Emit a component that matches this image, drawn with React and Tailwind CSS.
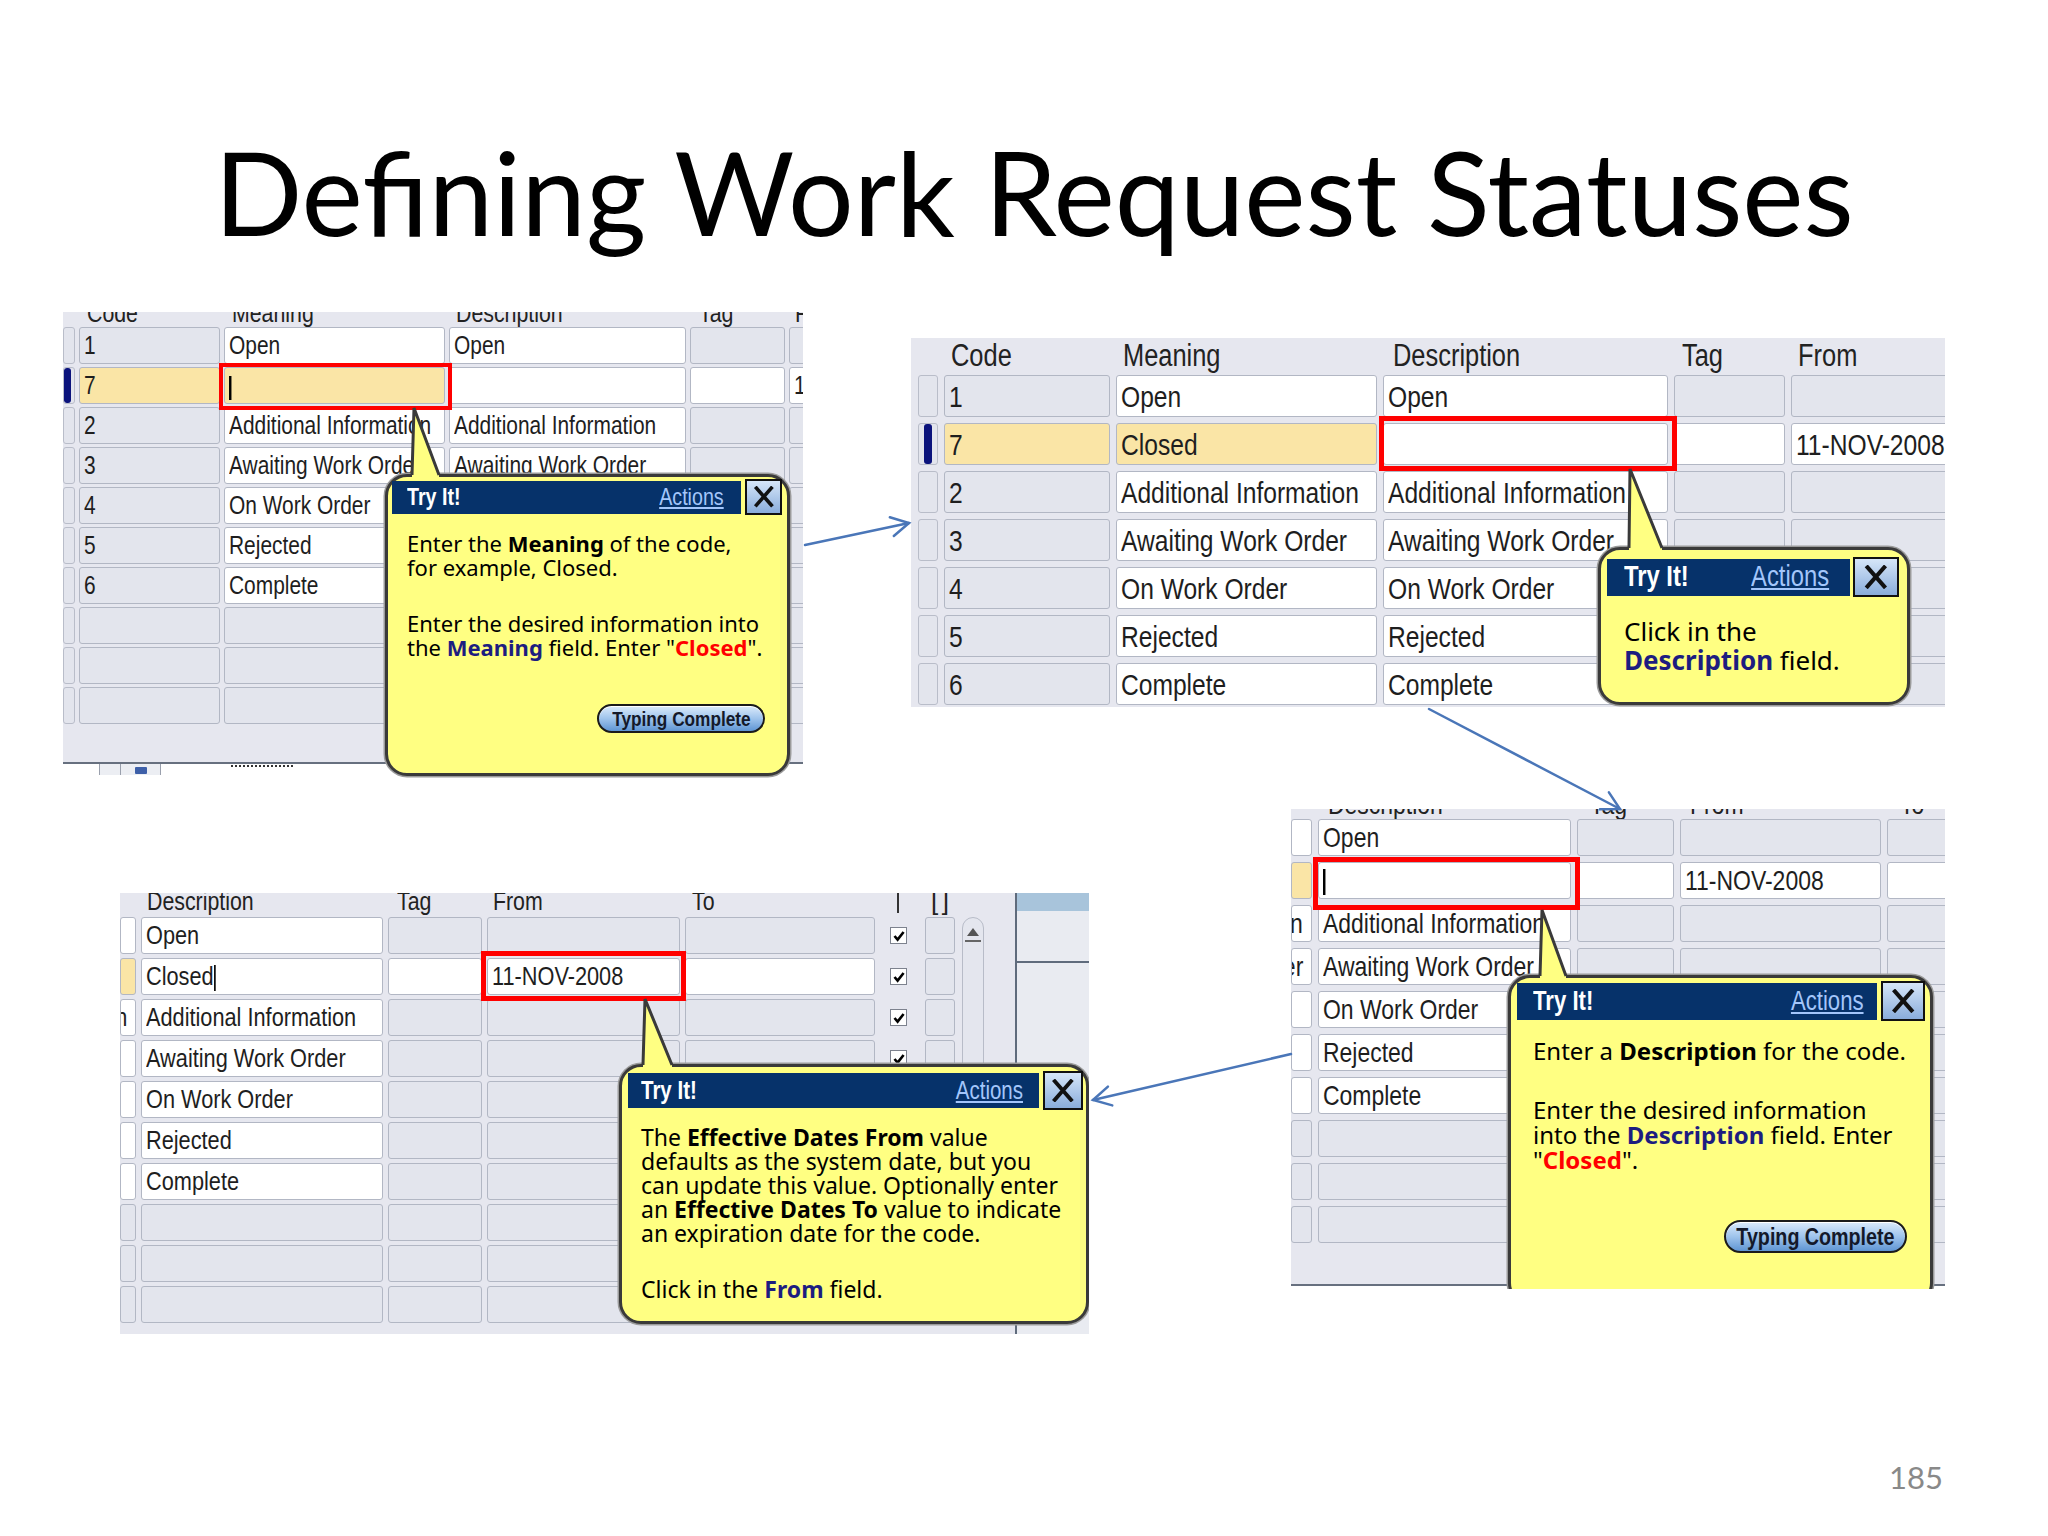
import React from 'react';

const ORA = "font-['Liberation_Sans',Arial,sans-serif]";
const TIPF = "font-['Noto_Sans',sans-serif]";
const NL = 'inline-block whitespace-nowrap origin-left scale-x-[0.82]';
const NR = 'inline-block whitespace-nowrap origin-right scale-x-[0.82]';
const NC = 'inline-block whitespace-nowrap origin-center scale-x-[0.82]';

function Cell({ w, kind = 'gray', right = false, children }) {
  const bg = kind === 'white' ? 'bg-white' : kind === 'yellow' ? 'bg-[#fae5a6]' : 'bg-[#e3e5ed]';
  const has = children !== undefined && children !== null && children !== '';
  return (
    <div
      className={`${w} ${bg} h-full shrink-0 overflow-hidden whitespace-nowrap rounded-[3px] border-[1.5px] border-[#b2b7c4] flex items-center ${right ? 'justify-end pr-[8px]' : 'pl-[4px]'} text-[#1e1e1e]`}
    >
      {has && <span className={right ? NR : NL}>{children}</span>}
    </div>
  );
}

function Ind({ w, sel, bar }) {
  return (
    <div className={`${w} h-full shrink-0 overflow-hidden rounded-[3px] border-[1.5px] border-[#b9bdc9] bg-[#e3e5ed] flex`}>
      {sel && <div className={`${bar} h-full rounded-[3px] bg-[#0b137c]`} />}
    </div>
  );
}

function Caret({ h = 'h-[24px]' }) {
  return <span className={`inline-block align-middle w-[2.5px] ${h} bg-black`} />;
}

function XBtn({ cls }) {
  return (
    <div className={`${cls} shrink-0 border-[2.5px] border-[#111] bg-linear-to-b from-[#d6e6f8] to-[#8aaddb] flex items-center justify-center`}>
      <svg viewBox="0 0 20 20" className="w-[66%] h-[66%]">
        <path d="M3 2 L17 18 M17 2 L3 18" stroke="#111" strokeWidth="3.4" strokeLinecap="square" fill="none" />
      </svg>
    </div>
  );
}

function TipBox({ className, children }) {
  return (
    <div className={`absolute ${className} rounded-[22px] border-[3px] border-[#3a3a3a] bg-[#ffff82] shadow-[0_0_0_1.5px_#9b9b9b] flex flex-col text-black ${TIPF}`}>
      {children}
    </div>
  );
}

function TipHeader({ wrap, bar, title, actions, xbtn }) {
  return (
    <div className={`flex items-center ${wrap}`}>
      <div className={`${bar} shrink-0 bg-[#06326a] flex items-center justify-between ${ORA}`}>
        <span className={`${title} font-bold text-white`}>
          <span className={NL}>Try It!</span>
        </span>
        <span className={`${actions} text-[#a3c6fb]`}>
          <span className={`${NR} underline`}>Actions</span>
        </span>
      </div>
      <XBtn cls={xbtn} />
    </div>
  );
}

function TypingBtn({ cls }) {
  return (
    <div className={`${cls} self-end rounded-full border-[2.5px] border-[#1b1b1b] bg-linear-to-b from-[#dcebfb] via-[#9fc4ec] to-[#5f95d3] shadow-[inset_0_1px_0_#ffffff] flex items-center justify-center font-bold leading-none text-[#14192a] ${ORA}`}>
      <span className={NC}>Typing Complete</span>
    </div>
  );
}

function Tail({ tip, bl, br, top }) {
  const pts = `${tip[0]},${tip[1]} ${bl},${top} ${bl},${top + 6} ${br},${top + 6} ${br},${top}`;
  return (
    <svg className="absolute left-0 top-0 w-full h-full pointer-events-none overflow-visible">
      <polygon points={pts} fill="#ffff82" />
      <polyline points={`${bl},${top + 1} ${tip[0]},${tip[1]} ${br},${top + 1}`} fill="none" stroke="#3a3a3a" strokeWidth="3" />
    </svg>
  );
}

function Check() {
  return (
    <div className="w-[17px] h-[17px] bg-white border-[1.5px] border-[#7d828e] flex items-center justify-center">
      <svg viewBox="0 0 12 12" className="w-[12px] h-[12px]">
        <path d="M1.5 6 L4.6 9.6 L10.6 2" fill="none" stroke="#000" strokeWidth="2.6" />
      </svg>
    </div>
  );
}

function Arrow({ x1, y1, x2, y2 }) {
  const a = Math.atan2(y2 - y1, x2 - x1);
  const L = 20;
  const s = 0.5;
  const p1 = [x2 - L * Math.cos(a - s), y2 - L * Math.sin(a - s)];
  const p2 = [x2 - L * Math.cos(a + s), y2 - L * Math.sin(a + s)];
  return (
    <g stroke="#4a76b8" strokeWidth="2.5" fill="none" strokeLinecap="round">
      <line x1={x1} y1={y1} x2={x2} y2={y2} />
      <polyline points={`${p1[0]},${p1[1]} ${x2},${y2} ${p2[0]},${p2[1]}`} />
    </g>
  );
}

function Hd({ cls, children }) {
  return (
    <div className={`${cls} shrink-0`}>
      <span className={NL}>{children}</span>
    </div>
  );
}

const DATA = [
  { c: '1', m: 'Open', d: 'Open' },
  { c: '7', sel: true },
  { c: '2', m: 'Additional Information', d: 'Additional Information' },
  { c: '3', m: 'Awaiting Work Order', d: 'Awaiting Work Order' },
  { c: '4', m: 'On Work Order', d: 'On Work Order' },
  { c: '5', m: 'Rejected', d: 'Rejected' },
  { c: '6', m: 'Complete', d: 'Complete' },
];
const P1ROWS = [...DATA, {}, {}, {}];

const NAVY = 'text-[#1d1d80]';
const RED = 'text-[#ff0000]';

function Panel1() {
  return (
    <div className="absolute left-[63px] top-[312px] w-[740px] h-[469px] overflow-hidden bg-white">
      <div className={`h-[452px] bg-[#e6e7ef] border-b-[2px] border-[#67707f] flex flex-col ${ORA}`}>
        <div className="h-[15px] overflow-hidden flex items-end gap-[4px] text-[26px] leading-[26px] text-[#222]">
          <div className="w-[12px] shrink-0" />
          <Hd cls="w-[141px] pl-[8px] mb-[1px]">Code</Hd>
          <Hd cls="w-[221px] pl-[8px] mb-[1px]">Meaning</Hd>
          <Hd cls="w-[237px] pl-[7px] mb-[1px]">Description</Hd>
          <Hd cls="w-[95px] pl-[9px] mb-[1px]">Tag</Hd>
          <Hd cls="w-[40px] pl-[6px] mb-[1px]">F</Hd>
        </div>
        <div className="flex flex-col gap-[3px] text-[25.5px]">
          {P1ROWS.map((r, i) => (
            <div key={i} className="flex h-[37px] gap-[4px]">
              <Ind w="w-[12px]" sel={r.sel} bar="w-[7px]" />
              <Cell w="w-[141px]" kind={r.sel ? 'yellow' : 'gray'}>{r.c}</Cell>
              <Cell w="w-[221px]" kind={r.sel ? 'yellow' : r.c ? 'white' : 'gray'}>{r.sel ? <Caret /> : r.m}</Cell>
              <Cell w="w-[237px]" kind={r.c ? 'white' : 'gray'}>{r.d}</Cell>
              <Cell w="w-[95px]" kind={r.sel ? 'white' : 'gray'} />
              <Cell w="w-[40px]" kind={r.sel ? 'white' : 'gray'}>{r.sel ? '1' : ''}</Cell>
            </div>
          ))}
        </div>
      </div>
      <div className="h-[13px] flex items-start pl-[36px]">
        <div className="w-[22px] h-[11px] border-x-[1.5px] border-[#9aa0ad] bg-[#eceef3]" />
        <div className="w-[40px] h-[11px] border-r-[1.5px] border-[#9aa0ad] bg-[#eceef3] flex justify-center">
          <div className="w-[12px] h-[7px] mt-[3px] bg-[#3d5fa8] rounded-[1px]" />
        </div>
        <div className="ml-[70px] w-[62px] h-[3px] mt-[1px] border-t-[2px] border-dotted border-[#333]" />
      </div>
      <div className="absolute left-[156px] top-[51px] w-[233px] h-[47px] border-[4px] border-[#ff0000]" />
      <TipBox className="left-[322px] top-[162px] w-[405px] h-[302px]">
        <TipHeader wrap="pt-[2px] pl-[4px] gap-[4px]" bar="w-[349px] h-[33px]" title="text-[24px] pl-[15px]" actions="text-[24px] pr-[17px]" xbtn="w-[37px] h-[36px]" />
        <div className="mt-[16px] pl-[19px] text-[22px] leading-[24px] whitespace-nowrap">
          <p>Enter the <b>Meaning</b> of the code,<br />for example, Closed.</p>
          <p className="mt-[32px]">Enter the desired information into<br />the <b className={NAVY}>Meaning</b> field. Enter "<b className={RED}>Closed</b>".</p>
        </div>
        <TypingBtn cls="mt-[45px] mr-[22px] w-[168px] h-[29px] text-[21px]" />
      </TipBox>
      <Tail tip={[351, 96]} bl={349} br={376} top={162} />
    </div>
  );
}

function Panel2() {
  return (
    <div className={`absolute left-[911px] top-[338px] w-[1034px] h-[369px] overflow-hidden bg-[#e6e7ef] ${ORA}`}>
      <div className="h-[37px] flex gap-[6px] pl-[7px] pt-[2px] text-[31px] leading-[31px] text-[#222]">
        <div className="w-[20px] shrink-0" />
        <Hd cls="w-[166px] pl-[7px]">Code</Hd>
        <Hd cls="w-[261px] pl-[7px]">Meaning</Hd>
        <Hd cls="w-[285px] pl-[10px]">Description</Hd>
        <Hd cls="w-[111px] pl-[8px]">Tag</Hd>
        <Hd cls="w-[180px] pl-[7px]">From</Hd>
      </div>
      <div className="flex flex-col gap-[6px] pl-[7px] text-[30px]">
        {DATA.map((r, i) => (
          <div key={i} className="flex h-[42px] gap-[6px]">
            <Ind w="w-[20px]" sel={r.sel} bar="ml-[5px] w-[8px]" />
            <Cell w="w-[166px]" kind={r.sel ? 'yellow' : 'gray'}>{r.c}</Cell>
            <Cell w="w-[261px]" kind={r.sel ? 'yellow' : 'white'}>{r.sel ? 'Closed' : r.m}</Cell>
            <Cell w="w-[285px]" kind="white">{r.d}</Cell>
            <Cell w="w-[111px]" kind={r.sel ? 'white' : 'gray'} />
            <Cell w="w-[180px]" kind={r.sel ? 'white' : 'gray'}>{r.sel ? '11-NOV-2008' : ''}</Cell>
          </div>
        ))}
      </div>
      <div className="absolute left-[468px] top-[78px] w-[298px] h-[55px] border-[5px] border-[#ff0000]" />
      <TipBox className="left-[687px] top-[209px] w-[312px] h-[158px]">
        <TipHeader wrap="pt-[7px] pl-[6px] gap-[3px]" bar="w-[243px] h-[37px]" title="text-[29px] pl-[17px]" actions="text-[29px] pr-[21px]" xbtn="w-[46px] h-[40px]" />
        <div className="mt-[20px] pl-[23px] text-[26px] leading-[29px] whitespace-nowrap">
          Click in the<br /><b className={NAVY}>Description</b> field.
        </div>
      </TipBox>
      <Tail tip={[719, 131]} bl={718} br={751} top={209} />
    </div>
  );
}

function Panel3() {
  const rows = [...DATA, {}, {}, {}];
  return (
    <div className="absolute left-[1291px] top-[809px] w-[654px] h-[480px] overflow-hidden bg-white">
      <div className={`h-[477px] bg-[#e6e7ef] border-b-[2px] border-[#67707f] flex flex-col ${ORA}`}>
        <div className="h-[10px] overflow-hidden flex items-end gap-[6px] text-[28px] leading-[28px] text-[#222]">
          <div className="w-[21px] shrink-0" />
          <Hd cls="w-[253px] pl-[10px]">Description</Hd>
          <Hd cls="w-[97px] pl-[13px]">Tag</Hd>
          <Hd cls="w-[201px] pl-[10px]">From</Hd>
          <Hd cls="w-[80px] pl-[13px]">To</Hd>
        </div>
        <div className="flex flex-col gap-[6px] text-[28px]">
          {rows.map((r, i) => (
            <div key={i} className="flex h-[37px] gap-[6px]">
              <Cell w="w-[21px]" kind={r.sel ? 'yellow' : r.c ? 'white' : 'gray'} right>
                {r.c === '2' || r.c === '3' ? r.m : ''}
              </Cell>
              <Cell w="w-[253px]" kind={r.c ? 'white' : 'gray'}>{r.sel ? <Caret h="h-[26px]" /> : r.d}</Cell>
              <Cell w="w-[97px]" kind={r.sel ? 'white' : 'gray'} />
              <Cell w="w-[201px]" kind={r.sel ? 'white' : 'gray'}>{r.sel ? '11-NOV-2008' : ''}</Cell>
              <Cell w="w-[80px]" kind={r.sel ? 'white' : 'gray'} />
            </div>
          ))}
        </div>
      </div>
      <div className="absolute left-[22px] top-[48px] w-[267px] h-[53px] border-[5px] border-[#ff0000]" />
      <TipBox className="left-[217px] top-[166px] w-[425px] h-[330px]">
        <TipHeader wrap="pt-[3px] pl-[6px] gap-[4px]" bar="w-[360px] h-[37px]" title="text-[27px] pl-[16px]" actions="text-[27px] pr-[13px]" xbtn="w-[44px] h-[40px]" />
        <div className="mt-[17px] pl-[22px] text-[24px] leading-[25px] whitespace-nowrap">
          <p>Enter a <b>Description</b> for the code.</p>
          <p className="mt-[34px]">Enter the desired information<br />into the <b className={NAVY}>Description</b> field. Enter<br />"<b className={RED}>Closed</b>".</p>
        </div>
        <TypingBtn cls="mt-[48px] mr-[23px] w-[183px] h-[33px] text-[24px]" />
      </TipBox>
      <Tail tip={[251, 101]} bl={249} br={275} top={166} />
    </div>
  );
}

function Panel4() {
  const rows = [...DATA, {}, {}, {}];
  return (
    <div className={`absolute left-[120px] top-[893px] w-[969px] h-[441px] overflow-hidden bg-[#e6e7ef] flex ${ORA}`}>
      <div className="w-[842px] shrink-0 flex flex-col">
        <div className="h-[24px] overflow-hidden flex items-end gap-[5px] text-[26px] leading-[26px] text-[#222]">
          <div className="w-[16px] shrink-0" />
          <Hd cls="w-[242px] pl-[6px] mb-[3px]">Description</Hd>
          <Hd cls="w-[94px] pl-[9px] mb-[3px]">Tag</Hd>
          <Hd cls="w-[193px] pl-[6px] mb-[3px]">From</Hd>
          <Hd cls="w-[190px] pl-[7px] mb-[3px]">To</Hd>
          <div className="w-[40px] shrink-0 self-start pl-[17px]">
            <div className="w-[2px] h-[20px] bg-[#333]" />
          </div>
          <div className="w-[30px] shrink-0 self-start flex justify-between px-[6px] leading-[20px] -mt-[2px]">
            <span>[</span>
            <span>]</span>
          </div>
        </div>
        <div className="flex flex-col gap-[4px] text-[26.5px]">
          {rows.map((r, i) => (
            <div key={i} className="flex h-[37px] gap-[5px]">
              <Cell w="w-[16px]" kind={r.sel ? 'yellow' : r.c ? 'white' : 'gray'} right>
                {r.c === '2' ? r.m : ''}
              </Cell>
              <Cell w="w-[242px]" kind={r.c ? 'white' : 'gray'}>
                {r.sel ? (
                  <>
                    Closed
                    <Caret h="h-[26px]" />
                  </>
                ) : (
                  r.d
                )}
              </Cell>
              <Cell w="w-[94px]" kind={r.sel ? 'white' : 'gray'} />
              <Cell w="w-[193px]" kind={r.sel ? 'white' : 'gray'}>{r.sel ? '11-NOV-2008' : ''}</Cell>
              <Cell w="w-[190px]" kind={r.sel ? 'white' : 'gray'} />
              <div className="w-[40px] shrink-0 pl-[10px] flex items-center">{r.c && <Check />}</div>
              <Cell w="w-[30px]" kind="gray" />
            </div>
          ))}
        </div>
      </div>
      <div className="w-[22px] shrink-0 pt-[24px]">
        <div className="h-[400px] rounded-t-[11px] border-[1.5px] border-[#b8bcc8] bg-[#e4e6ee] flex flex-col items-center pt-[10px]">
          <div className="w-0 h-0 border-l-[6px] border-r-[6px] border-b-[8px] border-l-transparent border-r-transparent border-b-[#555]" />
          <div className="mt-[4px] w-[16px] h-[2px] bg-[#666]" />
        </div>
      </div>
      <div className="w-[31px] shrink-0" />
      <div className="w-[2px] shrink-0 bg-[#5f6b7c]" />
      <div className="flex-1 flex flex-col bg-[#e9ebf1]">
        <div className="h-[18px] bg-[#a8c4db]" />
        <div className="h-[50px]" />
        <div className="h-[2px] bg-[#5f6b7c]" />
      </div>
      <div className="absolute left-[361px] top-[58px] w-[205px] h-[50px] border-[5px] border-[#ff0000]" />
      <TipBox className="left-[499px] top-[171px] w-[470px] h-[260px]">
        <TipHeader wrap="pt-[4px] pl-[6px] gap-[4px]" bar="w-[411px] h-[35px]" title="text-[25px] pl-[13px]" actions="text-[25px] pr-[16px]" xbtn="w-[40px] h-[39px]" />
        <div className="mt-[15px] pl-[19px] text-[23px] leading-[24px] whitespace-nowrap">
          <p>
            The <b>Effective Dates From</b> value<br />
            defaults as the system date, but you<br />
            can update this value. Optionally enter<br />
            an <b>Effective Dates To</b> value to indicate<br />
            an expiration date for the code.
          </p>
          <p className="mt-[32px]">Click in the <b className={NAVY}>From</b> field.</p>
        </div>
      </TipBox>
      <Tail tip={[525, 106]} bl={523} br={552} top={171} />
    </div>
  );
}

export default function App() {
  return (
    <div className="relative w-[2048px] h-[1536px] bg-white overflow-hidden">
      <div className="pt-[134px] pl-[20px] text-center text-[116px] leading-none font-['Lato',sans-serif] text-black whitespace-nowrap">
        Defining Work Request Statuses
      </div>
      <Panel1 />
      <Panel2 />
      <Panel3 />
      <Panel4 />
      <svg className="absolute left-0 top-0 w-[2048px] h-[1536px] pointer-events-none">
        <Arrow x1={805} y1={545} x2={909} y2={523} />
        <Arrow x1={1429} y1={709} x2={1620} y2={809} />
        <Arrow x1={1291} y1={1054} x2={1093} y2={1100} />
      </svg>
      <div className="absolute left-[1889px] top-[1462px] text-[31px] leading-none text-[#898989] font-['Lato',sans-serif]">
        185
      </div>
    </div>
  );
}
